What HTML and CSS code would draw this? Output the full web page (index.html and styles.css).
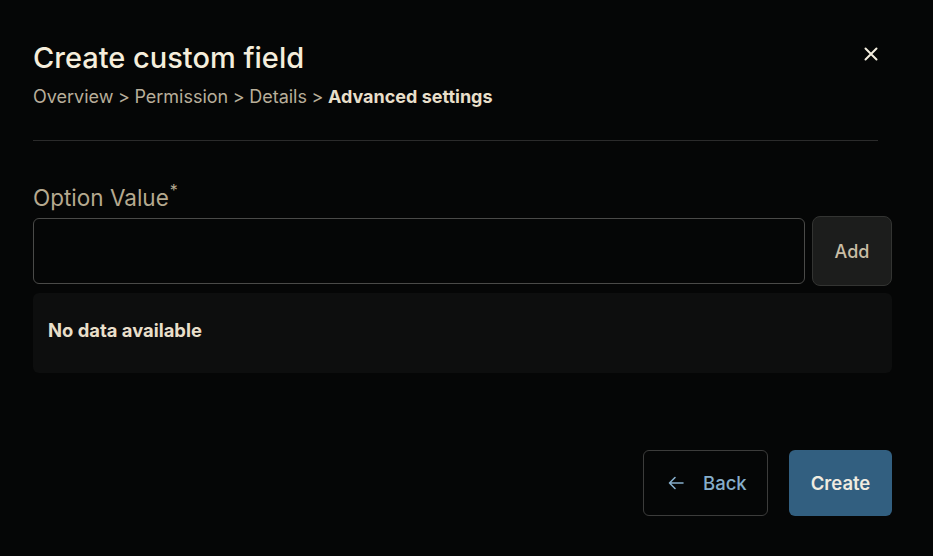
FILE: index.html
```html
<!DOCTYPE html>
<html lang="en">
<head>
<meta charset="utf-8">
<title>Create custom field</title>
<link rel="stylesheet" href="styles.css">
</head>
<body>
<div class="modal">
  <div class="header">
    <div class="header-text">
      <h1 class="title">Create custom field</h1>
      <nav class="crumbs">
        <span>Overview</span><span class="sep">&gt;</span><span>Permission</span><span class="sep">&gt;</span><span>Details</span><span class="sep">&gt;</span><span class="current">Advanced settings</span>
      </nav>
    </div>
    <button class="close" aria-label="Close">
      <svg width="14" height="14" viewBox="0 0 14 14"><path d="M1.5 1.5 L12.5 12.5 M12.5 1.5 L1.5 12.5" stroke="#f4eedf" stroke-width="2" stroke-linecap="round"/></svg>
    </button>
  </div>
  <div class="divider"></div>

  <label class="label">Option Value<sup class="req">*</sup></label>
  <div class="input-row">
    <input class="input" type="text">
    <button class="add">Add</button>
  </div>
  <div class="empty">No data available</div>

  <div class="actions">
    <button class="back">
      <svg width="16" height="14" viewBox="0 0 16 14"><path d="M15 7 H1.5 M7 1.5 L1.5 7 L7 12.5" fill="none" stroke="#86aecb" stroke-width="1.6" stroke-linecap="round" stroke-linejoin="round"/></svg>
      <span>Back</span>
    </button>
    <button class="create">Create</button>
  </div>
</div>
</body>
</html>
```

FILE: styles.css
```css
html, body {
  margin: 0;
  padding: 0;
  background: #050606;
  height: 100%;
}
body {
  font-family: Inter, "Noto Sans", "Liberation Sans", sans-serif;
  color: #f4eedf;
}
.modal {
  padding: 41px 41px 0 33px;
  display: flex;
  flex-direction: column;
}
.header {
  display: flex;
  justify-content: space-between;
  align-items: flex-start;
  margin-right: 14px;
}
.title {
  margin: 0;
  font-size: 29px;
  font-weight: 500;
  line-height: 34px;
  color: #f5eedc;
}
.crumbs {
  margin-top: 8px;
  font-size: 18px;
  line-height: 27px;
  color: #b8ae9a;
}
.crumbs .sep {
  margin: 0 4.5px;
}
.crumbs .current {
  font-weight: 700;
  color: #e8dfca;
}
.close {
  background: none;
  border: none;
  padding: 0;
  margin-top: 6px;
  width: 14px;
  height: 14px;
  display: flex;
  cursor: pointer;
}
.divider {
  height: 1px;
  background: #2b2b2b;
  margin: 30px 14px 0 0;
}
.label {
  margin-top: 42px;
  font-size: 22.5px;
  line-height: 30px;
  color: #b5a98f;
}
.req {
  font-size: 16px;
  vertical-align: top;
  line-height: 16px;
  position: relative;
  top: -1px;
  margin-left: 1px;
}
.input-row {
  margin-top: 3px;
  display: flex;
  align-items: center;
  gap: 7px;
}
.input {
  flex: 1;
  height: 66px;
  box-sizing: border-box;
  background: #050606;
  border: 1px solid #4a4a48;
  border-radius: 6px;
  color: #f4eedf;
  font: inherit;
  padding: 0 14px;
  outline: none;
}
.add {
  width: 80px;
  height: 70px;
  box-sizing: border-box;
  background: #1c1d1c;
  border: 1px solid #333432;
  border-radius: 8px;
  color: #c9bea5;
  font-family: inherit;
  font-size: 18px;
  font-weight: 500;
}
.empty {
  margin-top: 7px;
  height: 80px;
  box-sizing: border-box;
  background: #0d0e0e;
  border-radius: 6px;
  display: flex;
  align-items: center;
  padding: 0 0 7px 15px;
  font-size: 18.4px;
  font-weight: 700;
  color: #e8dfca;
}
.actions {
  margin-top: 77px;
  display: flex;
  justify-content: flex-end;
  gap: 21px;
}
.back {
  width: 125px;
  height: 66px;
  box-sizing: border-box;
  background: transparent;
  border: 1px solid #3c3c3b;
  border-radius: 6px;
  display: flex;
  align-items: center;
  padding-left: 24px;
  gap: 19px;
  color: #86aecb;
  font-family: inherit;
  font-size: 18.5px;
  font-weight: 500;
}
.create {
  width: 103px;
  height: 66px;
  background: #325f80;
  border: none;
  border-radius: 6px;
  color: #f0ece0;
  font-family: inherit;
  font-size: 18.5px;
  font-weight: 600;
}
```
